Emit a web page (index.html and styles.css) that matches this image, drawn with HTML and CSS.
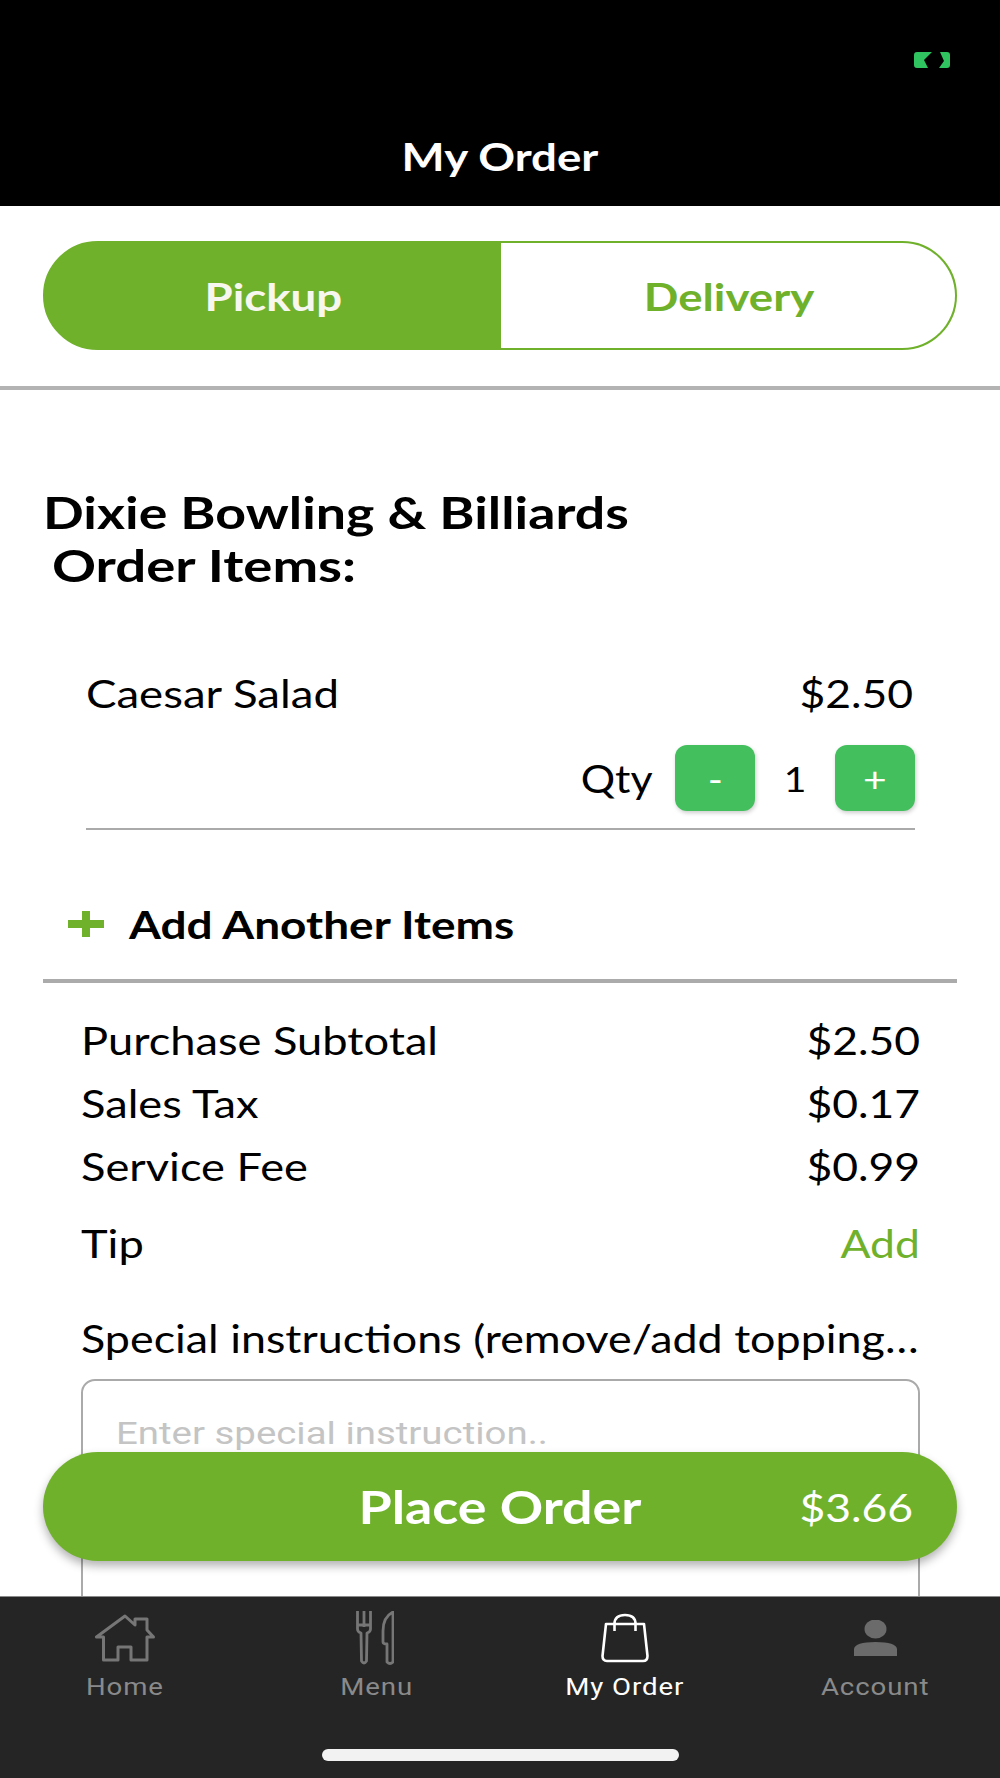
FILE: index.html
```html
<!DOCTYPE html>
<html lang="en">
<head>
<meta charset="utf-8">
<title>My Order</title>
<link rel="stylesheet" href="styles.css">
</head>
<body>
<div class="app">
  <header class="header">
    <svg class="status" viewBox="0 0 36 16" aria-hidden="true"><path d="M3 0H18L10 8L14 16H3Q0 16 0 13V3Q0 0 3 0Z" fill="#2fc45f"/><path d="M26 0H33Q36 0 36 3V13Q36 16 33 16H25L30 9Z" fill="#2fc45f"/></svg>
    <h1 class="header-title"><span class="wide">My Order</span></h1>
  </header>
  <main class="content">
    <div class="toggle">
      <div class="toggle-opt toggle-active"><span class="wide">Pickup</span></div>
      <div class="toggle-opt toggle-other"><span class="wide">Delivery</span></div>
    </div>
    <div class="rule-thick"></div>
    <h2 class="venue"><span class="venue-line">Dixie Bowling &amp; Billiards</span><span class="venue-line venue-sub">Order Items:</span></h2>
    <div class="item">
      <div class="item-row"><span class="wide wide-left">Caesar Salad</span><span class="wide-price">$2.50</span></div>
      <div class="qty-row">
        <span class="qty-label">Qty</span>
        <button class="qty-btn"><span class="wide">-</span></button>
        <span class="qty-value">1</span>
        <button class="qty-btn"><span class="wide">+</span></button>
      </div>
      <div class="item-rule"></div>
    </div>
    <div class="add-row">
      <svg class="add-icon" viewBox="0 0 36 26" aria-hidden="true"><path d="M14 0H22V9H36V17H22V26H14V17H0V9H14Z" fill="#70b12c"/></svg>
      <span class="add-text">Add Another Items</span>
    </div>
    <div class="rule-wide"></div>
    <div class="summary">
      <div class="sum-row"><span class="sum-name">Purchase Subtotal</span><span class="wide-price">$2.50</span></div>
      <div class="sum-row"><span class="sum-name">Sales Tax</span><span class="wide-price">$0.17</span></div>
      <div class="sum-row"><span class="sum-name">Service Fee</span><span class="wide-price">$0.99</span></div>
      <div class="sum-row tip-row"><span class="sum-name">Tip</span><span class="wide-price tip-add">Add</span></div>
      <div class="special-label">Special instructions (remove/add toppings, etc.)</div>
      <div class="special-box"><span class="wide wide-left">Enter special instruction..</span></div>
    </div>
  </main>
  <button class="place-order"><span class="place-text">Place Order</span><span class="place-price">$3.66</span></button>
  <footer class="tabbar">
    <nav class="tabs">
      <div class="tab">
        <div class="tab-icon"><svg width="60" height="48" viewBox="0 0 60 48" fill="none" stroke="#767676" stroke-width="3" stroke-linejoin="round" stroke-linecap="round"><path d="M30 2L1.500 23H8.500V46H23V33H36V46H52V23H58.500L52 16V5H40V11Z"/></svg></div>
        <span class="tab-label">Home</span>
      </div>
      <div class="tab">
        <div class="tab-icon"><svg width="38" height="54" viewBox="0 0 38 54" fill="none" stroke="#767676" stroke-width="2.800" stroke-linejoin="round"><path d="M1.500 0V18Q1.500 21 5 22L5.500 50Q8 54 10.500 50L11 22Q14.500 21 14.500 18V0M8 0V16M1.500 14H14.500"/><path d="M37 1Q27 6 27 20V31Q27 33 31 33V51Q34 54 37 51Z"/></svg></div>
        <span class="tab-label tab-label-menu">Menu</span>
      </div>
      <div class="tab tab-active">
        <div class="tab-icon"><svg width="48" height="50" viewBox="0 0 48 50" fill="none" stroke="#fff" stroke-width="2.600" stroke-linejoin="round"><path d="M5 11H43L46.500 43Q46.500 48 42 48H6Q1.500 48 1.500 43Z"/><path d="M13.500 18V11Q13.500 2 24 2Q34.500 2 34.500 11V18"/></svg></div>
        <span class="tab-label">My Order</span>
      </div>
      <div class="tab">
        <div class="tab-icon"><svg width="43" height="36" viewBox="0 0 43 36" fill="#6b6b6b"><ellipse cx="21.500" cy="9" rx="11" ry="9.500"/><path d="M0 36V29Q1 22 21.500 22Q42 22 43 29V36Z"/></svg></div>
        <span class="tab-label">Account</span>
      </div>
    </nav>
    <div class="home-bar"></div>
  </footer>
</div>
</body>
</html>
```

FILE: styles.css
```css
* { box-sizing: border-box; }
html, body { margin: 0; padding: 0; background: #fff; }
body { font-family: "Lato", "Liberation Sans", sans-serif; color: #000; }
.app { position: relative; width: 1000px; height: 1778px; display: flex; flex-direction: column; overflow: hidden; }
.wide { display: inline-block; transform: scaleX(1.2); }
.wide-left { transform-origin: left center; }
.wide-price { display: inline-block; transform: scaleX(1.17); transform-origin: right center; }
.header { position: relative; flex: none; height: 206px; background: #000; display: flex; align-items: flex-end; justify-content: center; }
.status { position: absolute; left: 914px; top: 52px; width: 36px; height: 16px; }
.header-title { margin: 0 0 26px; color: #fff; font-size: 38px; line-height: 48px; font-weight: 700; }
.content { flex: 1; min-height: 0; overflow: hidden; }
.toggle { display: flex; height: 109px; margin: 35px 43px 0; border: 2px solid #70b12c; border-radius: 55px; background: #70b12c; overflow: hidden; }
.toggle-opt { display: flex; align-items: center; justify-content: center; background: #fff; color: #70b12c; font-size: 38px; font-weight: 700; }
.toggle-active { flex: none; width: 456px; background: #70b12c; color: #f7f7f0; }
.toggle-other { flex: 1; padding-left: 2px; }
.rule-thick { height: 4px; margin-top: 36px; background: #b3b3b3; }
.venue { margin: 96px 0 0 43px; font-size: 44px; line-height: 53px; font-weight: 700; }
.venue-line { display: block; width: fit-content; transform: scaleX(1.22); transform-origin: left center; }
.venue-sub { margin-left: 9px; transform: scaleX(1.24); }
.item { margin: 78px 85px 0 86px; font-size: 38px; }
.item-row { display: flex; justify-content: space-between; line-height: 46px; padding: 0 2px 0 0; }
.qty-row { display: flex; align-items: center; justify-content: flex-end; height: 66px; margin-top: 29px; }
.qty-label { display: inline-block; margin-right: 22px; transform: scaleX(1.13); transform-origin: right center; }
.qty-btn { width: 80px; height: 66px; padding: 0; border: 0; border-radius: 12px; background: #43bf5e; color: #fff; font-family: inherit; font-size: 34px; box-shadow: 1px 2px 4px rgba(0, 0, 0, 0.2); }
.qty-value { width: 80px; text-align: center; font-size: 34px; transform: scaleX(1.15); }
.item-rule { height: 2px; margin-top: 17px; background: #aaa; }
.add-row { display: flex; align-items: center; margin: 71px 0 0 68px; font-size: 38px; line-height: 46px; font-weight: 700; }
.add-icon { width: 36px; height: 26px; margin-right: 25px; }
.add-text { display: inline-block; transform: scaleX(1.21); transform-origin: left center; }
.rule-wide { height: 4px; margin: 32px 43px 0; background: #ababab; }
.summary { margin: 26px 80px 0 81px; font-size: 38px; }
.sum-row { display: flex; justify-content: space-between; height: 63px; line-height: 63px; }
.sum-name { display: inline-block; transform: scaleX(1.19); transform-origin: left center; }
.tip-row { height: 46px; line-height: 46px; margin-top: 22px; }
.tip-add { color: #70b12c; }
.special-label { width: 712px; margin-top: 49px; line-height: 46px; white-space: nowrap; overflow: hidden; text-overflow: ellipsis; transform: scaleX(1.18); transform-origin: left center; }
.special-box { height: 300px; margin-top: 18px; padding: 32px 33px; border: 2px solid #aaa; border-radius: 14px; color: #c4c4c4; font-family: "Roboto", sans-serif; font-size: 32px; line-height: 40px; }
.place-order { position: absolute; left: 43px; top: 1452px; width: 914px; height: 109px; padding: 0; border: 0; border-radius: 55px; background: #70b12c; color: #fff; font-family: inherit; box-shadow: 0 5px 10px rgba(0, 0, 0, 0.3); display: flex; align-items: center; justify-content: center; }
.place-text { font-size: 46px; font-weight: 700; transform: scaleX(1.17); }
.place-price { position: absolute; right: 44px; font-size: 38px; transform: scaleX(1.17); transform-origin: right center; }
.tabbar { flex: none; height: 182px; background: #252525; border-top: 1px solid #8a8a8a; }
.tabs { display: grid; grid-template-columns: repeat(4, 1fr); padding-top: 13px; }
.tab { display: flex; flex-direction: column; align-items: center; gap: 6px; color: #8a8a8a; }
.tab-active { color: #fff; }
.tab-icon { height: 56px; display: flex; align-items: center; justify-content: center; }
.tab-icon svg { display: block; }
.tab-label { font-family: "Roboto", sans-serif; font-size: 24px; line-height: 30px; letter-spacing: 0.8px; transform: scaleX(1.15); }
.tab-label-menu { margin-left: 3px; }
.home-bar { width: 357px; height: 12px; margin: 47px auto 0; border-radius: 6px; background: #f2f2f2; }
```
